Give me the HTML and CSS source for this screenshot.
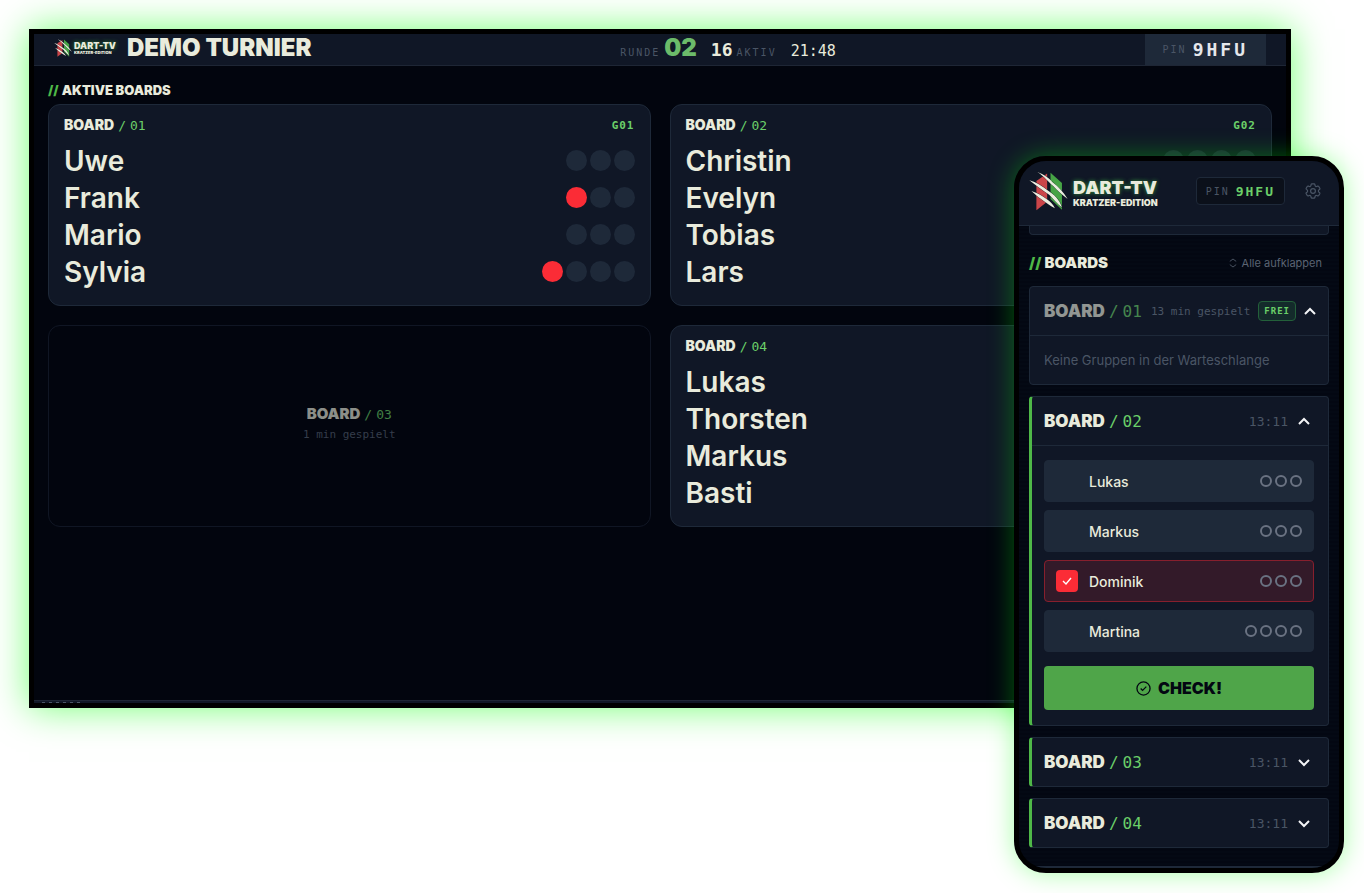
FILE: index.html
```html
<!DOCTYPE html>
<html lang="de">
<head>
    <meta charset="UTF-8">
    <meta name="viewport" content="width=device-width, initial-scale=1.0">
    <title>Dart-TV Kratzer-Edition</title>
    <link rel="stylesheet" href="styles.css">
</head>
<body>
    <svg class="sprite" aria-hidden="true">
        <symbol id="mark" viewBox="26 22 116 116">
            <path fill="#cb4549" d="M48 50 80 28V112L48 137z"/>
            <path fill="#46a445" d="M90 26 124 56V136L90 104z"/>
            <g fill="#eceee0" stroke="#101726" stroke-width="2" paint-order="stroke">
                <path d="M50 23C72 32 84 41 96 54 114 68 128 83 141 104 124 91 110 78 98 65 84 54 72 37 50 23z"/>
                <path d="M27 48C48 54 66 66 80 77 100 90 116 104 124 129 108 116 98 102 86 91 68 79 48 64 27 48z"/>
                <path d="M33 80C52 86 68 96 78 104 90 112 98 120 103 131 88 123 76 114 64 105 52 97 44 90 33 80z"/>
            </g>
        </symbol>
        <symbol id="up" viewBox="0 0 12 12">
            <path d="M1 9 6 4 11 9" fill="none" stroke="currentColor" stroke-width="2"/>
        </symbol>
        <symbol id="down" viewBox="0 0 12 12">
            <path d="M1 4 6 9 11 4" fill="none" stroke="currentColor" stroke-width="2"/>
        </symbol>
    </svg>

    <main class="stage">
        <section class="tv">
            <header class="tv-header">
                <div class="tv-brand">
                    <div class="logo logo-small">
                        <svg class="mark"><use href="#mark"/></svg>
                        <div class="logo-text"><b>DART-TV</b><small>KRATZER-EDITION</small></div>
                    </div>
                    <h1>DEMO TURNIER</h1>
                </div>
                <div class="tv-status">
                    <div class="status-item">
                        <span class="caption">RUNDE</span>
                        <span class="round">02</span>
                    </div>
                    <div class="status-item">
                        <span class="value">16</span>
                        <span class="caption">AKTIV</span>
                    </div>
                    <time class="clock">21:48</time>
                </div>
                <div class="tv-pin"><span class="caption">PIN</span><span class="code">9HFU</span></div>
            </header>

            <div class="tv-body">
                <h2 class="section-title"><span>//</span> AKTIVE BOARDS</h2>
                <div class="board-grid">
                    <article class="board">
                        <div class="board-head">
                            <h3 class="board-name">BOARD <span>/</span> <span>01</span></h3>
                            <span class="group">G01</span>
                        </div>
                        <ul class="players">
                            <li>Uwe <span class="lives"><i></i><i></i><i></i></span></li>
                            <li>Frank <span class="lives"><i class="lost"></i><i></i><i></i></span></li>
                            <li>Mario <span class="lives"><i></i><i></i><i></i></span></li>
                            <li>Sylvia <span class="lives"><i class="lost"></i><i></i><i></i><i></i></span></li>
                        </ul>
                    </article>
                    <article class="board">
                        <div class="board-head">
                            <h3 class="board-name">BOARD <span>/</span> <span>02</span></h3>
                            <span class="group">G02</span>
                        </div>
                        <ul class="players">
                            <li>Christin <span class="lives"><i></i><i></i><i></i><i></i></span></li>
                            <li>Evelyn</li>
                            <li>Tobias</li>
                            <li>Lars</li>
                        </ul>
                    </article>
                    <article class="board board-free">
                        <h3 class="board-name">BOARD <span>/</span> <span>03</span></h3>
                        <p>1 min gespielt</p>
                    </article>
                    <article class="board">
                        <div class="board-head">
                            <h3 class="board-name">BOARD <span>/</span> <span>04</span></h3>
                        </div>
                        <ul class="players">
                            <li>Lukas</li>
                            <li>Thorsten</li>
                            <li>Markus</li>
                            <li>Basti</li>
                        </ul>
                    </article>
                </div>
            </div>
            <div class="tv-footer"></div>
        </section>

        <section class="phone">
            <header class="phone-header">
                <div class="logo">
                    <svg class="mark"><use href="#mark"/></svg>
                    <div class="logo-text"><b>DART-TV</b><small>KRATZER-EDITION</small></div>
                </div>
                <div class="phone-pin"><span class="caption">PIN</span><span class="code">9HFU</span></div>
                <button class="settings" aria-label="Einstellungen">
                    <svg viewBox="2 2 20 20" fill="none" stroke="currentColor" stroke-width="1.5" stroke-linejoin="round">
                        <path d="M9.6 3.9c.1-.5.6-.9 1.1-.9h2.6c.5 0 1 .4 1.1.9l.2 1.3c.1.4.3.7.6.9l.3.2c.3.2.7.2 1.1.1l1.2-.5c.5-.2 1.1 0 1.4.5l1.3 2.2c.3.5.2 1.1-.3 1.4l-1 .8c-.3.2-.4.6-.4 1v.4c0 .4.1.7.4 1l1 .8c.4.4.5 1 .3 1.4l-1.3 2.2c-.3.5-.9.7-1.4.5l-1.2-.5c-.4-.1-.8-.1-1.1.1l-.3.2c-.3.2-.5.5-.6.9l-.2 1.3c-.1.5-.6.9-1.1.9h-2.6c-.5 0-1-.4-1.1-.9l-.2-1.3c-.1-.4-.3-.7-.6-.9l-.3-.2c-.3-.2-.7-.2-1.1-.1l-1.2.5c-.5.2-1.1 0-1.4-.5l-1.3-2.2c-.3-.5-.2-1.1.3-1.4l1-.8c.3-.3.4-.6.4-1v-.4c0-.4-.1-.8-.4-1l-1-.8c-.4-.4-.5-1-.3-1.4l1.3-2.2c.3-.5.9-.7 1.4-.5l1.2.5c.4.1.8.1 1.1-.1l.3-.2c.3-.2.5-.5.6-.9z"/>
                        <circle cx="12" cy="12" r="3"/>
                    </svg>
                </button>
            </header>

            <div class="phone-body">
                <div class="card-end"></div>
                <div class="phone-title">
                    <h2 class="section-title"><span>//</span> BOARDS</h2>
                    <button class="expand">
                        <svg viewBox="0 0 10 12" fill="none" stroke="currentColor"><path d="M1 4 5 1 9 4M1 8l4 3 4-3"/></svg>
                        Alle aufklappen
                    </button>
                </div>

                <article class="panel panel-free">
                    <button class="panel-head">
                        <span class="board-name">BOARD <span>/</span> <span>01</span></span>
                        <span class="played">13 min gespielt</span>
                        <span class="badge">FREI</span>
                        <svg class="chevron"><use href="#up"/></svg>
                    </button>
                    <p class="empty">Keine Gruppen in der Warteschlange</p>
                </article>

                <article class="panel panel-active">
                    <button class="panel-head">
                        <span class="board-name">BOARD <span>/</span> <span>02</span></span>
                        <time>13:11</time>
                        <svg class="chevron"><use href="#up"/></svg>
                    </button>
                    <form class="match">
                        <label class="player"><input type="checkbox"> Lukas <span class="rings"><i></i><i></i><i></i></span></label>
                        <label class="player"><input type="checkbox"> Markus <span class="rings"><i></i><i></i><i></i></span></label>
                        <label class="player selected">
                            <span class="tick">
                                <input type="checkbox" checked>
                                <svg viewBox="0 0 12 12"><path d="M2 6 5 9 10 3" fill="none" stroke="#fff" stroke-width="1.4"/></svg>
                            </span>
                            Dominik <span class="rings"><i></i><i></i><i></i></span>
                        </label>
                        <label class="player"><input type="checkbox"> Martina <span class="rings"><i></i><i></i><i></i><i></i></span></label>
                        <button type="button" class="check">
                            <svg viewBox="0 0 16 16" fill="none" stroke="currentColor" stroke-width="1.4"><circle cx="8" cy="8" r="7"/><path d="M5 8 7 10 11 6"/></svg>
                            CHECK!
                        </button>
                    </form>
                </article>

                <article class="panel panel-active">
                    <button class="panel-head">
                        <span class="board-name">BOARD <span>/</span> <span>03</span></span>
                        <time>13:11</time>
                        <svg class="chevron"><use href="#down"/></svg>
                    </button>
                </article>

                <article class="panel panel-active">
                    <button class="panel-head">
                        <span class="board-name">BOARD <span>/</span> <span>04</span></span>
                        <time>13:11</time>
                        <svg class="chevron"><use href="#down"/></svg>
                    </button>
                </article>
            </div>
            <div class="phone-footer"></div>
        </section>
    </main>
</body>
</html>
```
FILE: styles.css
```css
* {
    box-sizing: border-box;
}

body {
    margin: 0;
    background-color: #fff;
    color: #e9ebdc;
    font-family: "Inter", sans-serif;
}

h1, h2, h3, p, ul {
    margin: 0;
    padding: 0;
}

button {
    font: inherit;
    color: inherit;
    background: none;
    border: 0;
    padding: 0;
    cursor: pointer;
}

.sprite {
    display: none;
}

.stage {
    position: relative;
    min-height: 100vh;
    padding: 29px 73px 20px 29px;
}

.caption, .code, .value, .clock, .group, .played, .badge, time, .board-name span {
    font-family: "DejaVu Sans Mono", monospace;
}

.caption {
    color: #4a5565;
    font-size: 10px;
    letter-spacing: 2px;
}

/* TV screen */
.tv {
    display: flex;
    flex-direction: column;
    min-height: 76vh;
    border: 5px solid #000;
    background-color: #02050e;
    box-shadow: 0 0 36px rgba(0, 255, 0, 0.55);
}

.tv-header {
    display: flex;
    justify-content: space-between;
    align-items: center;
    height: 32px;
    padding: 0 20px;
    background-color: #101726;
    border-bottom: 1px solid #1e2635;
}

.tv-brand {
    display: flex;
    align-items: center;
    gap: 11px;
    padding-bottom: 3px;
}

.tv-brand h1 {
    font-size: 24px;
    line-height: 28px;
    font-weight: 900;
}

.logo {
    display: flex;
    align-items: center;
    gap: 5px;
}

.mark {
    width: 39px;
    height: 40px;
}

.logo-text {
    display: flex;
    flex-direction: column;
    margin-top: 4px;
}

.logo-text b {
    font-size: 18px;
    line-height: 20px;
    font-weight: 900;
    text-shadow: 0 0 4px #2f8f3a;
}

.logo-text small {
    font-size: 9px;
    line-height: 10px;
    font-weight: 900;
}

.logo-small {
    gap: 2px;
}

.logo-small .mark {
    width: 18px;
    height: 18px;
}

.logo-small .logo-text {
    margin-top: 0;
}

.logo-small b {
    font-size: 9px;
    line-height: 9px;
}

.logo-small small {
    font-size: 4px;
    line-height: 5px;
}

.tv-status {
    display: flex;
    align-items: baseline;
    gap: 14px;
    padding-bottom: 4px;
}

.status-item {
    display: flex;
    align-items: baseline;
    gap: 4px;
}

.round {
    color: #6cbb6a;
    font-size: 24px;
    font-weight: 900;
}

.value {
    font-size: 18px;
    font-weight: 700;
}

.clock {
    font-size: 15px;
}

.tv-pin {
    display: flex;
    align-items: center;
    gap: 6px;
    height: 31px;
    padding: 0 18px;
    background-color: #1e2939;
}

.tv-pin .code {
    color: #e5e7eb;
    font-size: 18px;
    font-weight: 700;
    letter-spacing: 3px;
}

.tv-body {
    flex: 1;
    padding: 15px 14px 14px;
}

.section-title {
    display: flex;
    gap: 3px;
    font-size: 13px;
    line-height: 18px;
    font-weight: 900;
}

.section-title span {
    color: #4fb848;
}

.board-grid {
    display: grid;
    grid-template-columns: 1fr 1fr;
    gap: 19px;
    margin-top: 5px;
}

.board {
    min-height: 202px;
    padding: 10px 15px 15px;
    border: 1px solid #1e2939;
    border-radius: 12px;
    background-color: #101726;
}

.board-head {
    display: flex;
    justify-content: space-between;
    align-items: center;
    height: 20px;
    margin-bottom: 7px;
}

.board-name {
    display: flex;
    align-items: baseline;
    gap: 4px;
    font-size: 14px;
    line-height: 20px;
    font-weight: 900;
}

.board-name span {
    color: #6bcf69;
    font-size: 13px;
    font-weight: 400;
}

.group {
    color: #6bcf69;
    font-size: 11px;
    font-weight: 700;
    letter-spacing: 1px;
}

.players {
    list-style: none;
}

.players li {
    display: flex;
    justify-content: space-between;
    align-items: center;
    height: 37px;
    font-size: 28px;
    font-weight: 600;
}

.lives {
    display: flex;
    gap: 3px;
}

.lives i {
    width: 21px;
    height: 21px;
    border-radius: 50%;
    background-color: #1e2939;
}

.lives .lost {
    background-color: #fb2c36;
}

.board-free {
    display: flex;
    flex-direction: column;
    justify-content: center;
    align-items: center;
    gap: 2px;
    border-color: #101624;
    background: none;
}

.board-free .board-name {
    font-size: 15px;
    opacity: 0.6;
}

.board-free p {
    color: #353d4b;
    font-family: "DejaVu Sans Mono", monospace;
    font-size: 11px;
    line-height: 16px;
}

/* ticker peeking in at the bottom edge */
.tv-footer {
    height: 3px;
    border-top: 1px solid #1e2635;
    background-color: #101726;
}

.tv-footer::after {
    content: "";
    display: block;
    width: 39px;
    height: 1px;
    margin: 1px 0 0 8px;
    background: repeating-linear-gradient(90deg, #4a5565 0 3px, transparent 3px 7px);
}

/* Phone lies over the TV */
.phone {
    position: absolute;
    top: 156px;
    right: 20px;
    width: 330px;
    overflow: hidden;
    border: 5px solid #000;
    border-radius: 32px;
    background: repeating-linear-gradient(#030712 0 2px, #040914 2px 4px);
    box-shadow: 0 0 26px rgba(0, 255, 0, 0.35);
}

.phone-header {
    display: flex;
    align-items: center;
    height: 65px;
    padding: 0 18px 4px 10px;
    background-color: #101726;
    border-bottom: 1px solid #1e2939;
}

.phone-pin {
    display: flex;
    align-items: center;
    gap: 6px;
    height: 28px;
    margin-left: auto;
    padding: 0 9px;
    border: 1px solid #1e2939;
    border-radius: 4px;
    background-color: #0b101a;
}

.phone-pin .code {
    color: #6bcf69;
    font-size: 13px;
    font-weight: 700;
    letter-spacing: 2px;
}

.settings {
    display: flex;
    margin-left: 20px;
    color: #4a5565;
}

.settings svg {
    width: 16px;
    height: 16px;
}

.phone-body {
    display: flex;
    flex-direction: column;
    gap: 11px;
    padding: 0 10px 18px;
}

.card-end {
    height: 9px;
    border: 1px solid #1e2939;
    border-top: 0;
    border-radius: 0 0 4px 4px;
    background-color: #101726;
}

.phone-title {
    display: flex;
    justify-content: space-between;
    align-items: center;
    height: 24px;
    margin-top: 5px;
    padding-right: 7px;
}

.phone-title .section-title {
    font-size: 15px;
}

.expand {
    display: flex;
    align-items: center;
    gap: 5px;
    color: #5b6473;
    font-size: 11px;
}

.expand svg {
    width: 8px;
    height: 10px;
}

.panel {
    border: 1px solid #1e2939;
    border-radius: 4px;
    background-color: #101726;
}

.panel-active {
    border-left: 3px solid #4fb848;
}

.panel-head {
    display: flex;
    align-items: center;
    gap: 8px;
    width: 100%;
    height: 48px;
    padding: 0 12px 0 14px;
}

.panel-active .panel-head {
    gap: 10px;
    padding: 0 18px 0 12px;
}

.panel .board-name {
    margin-right: auto;
    font-size: 17px;
    white-space: nowrap;
}

.panel .board-name span {
    font-size: 16px;
}

.panel-free .board-name {
    opacity: 0.6;
}

.played {
    color: #4a5565;
    font-size: 11px;
    white-space: nowrap;
}

.panel time {
    color: #4a5565;
    font-size: 13px;
}

.badge {
    padding: 3px 5px;
    border: 1px solid #23603a;
    border-radius: 4px;
    background-color: #142b2b;
    color: #6bcf69;
    font-size: 9px;
    line-height: 12px;
    font-weight: 700;
    letter-spacing: 1px;
}

.chevron {
    flex: none;
    width: 12px;
    height: 12px;
    color: #f3f4f6;
}

.empty {
    padding: 14px 14px;
    border-top: 1px solid #1e2939;
    color: #4a5565;
    font-size: 13px;
    line-height: 20px;
}

.match {
    display: flex;
    flex-direction: column;
    gap: 8px;
    padding: 14px 14px 15px 12px;
    border-top: 1px solid #1e2939;
}

.player {
    display: flex;
    align-items: center;
    gap: 11px;
    height: 42px;
    padding: 0 11px;
    border: 1px solid #1e2939;
    border-radius: 4px;
    background-color: #1e2939;
    font-size: 14px;
    font-weight: 500;
}

.player input {
    appearance: none;
    width: 22px;
    height: 22px;
    margin: 0;
    border-radius: 4px;
}

.player input:checked {
    background-color: #fb2c36;
}

.selected {
    border-color: #871f2d;
    background-color: #331a29;
}

.tick {
    display: grid;
    place-items: center;
}

.tick input, .tick svg {
    grid-area: 1 / 1;
}

.tick svg {
    width: 12px;
    height: 12px;
    pointer-events: none;
}

.rings {
    display: flex;
    gap: 3px;
    margin-left: auto;
}

.rings i {
    width: 12px;
    height: 12px;
    border: 2px solid #6a7282;
    border-radius: 50%;
}

.check {
    display: flex;
    justify-content: center;
    align-items: center;
    gap: 7px;
    height: 44px;
    margin-top: 6px;
    border-radius: 4px;
    background-color: #4fa549;
    color: #030712;
    font-size: 16px;
    font-weight: 900;
}

.check svg {
    width: 15px;
    height: 15px;
}

.phone-footer {
    height: 2px;
    background-color: #1e2939;
}
```
